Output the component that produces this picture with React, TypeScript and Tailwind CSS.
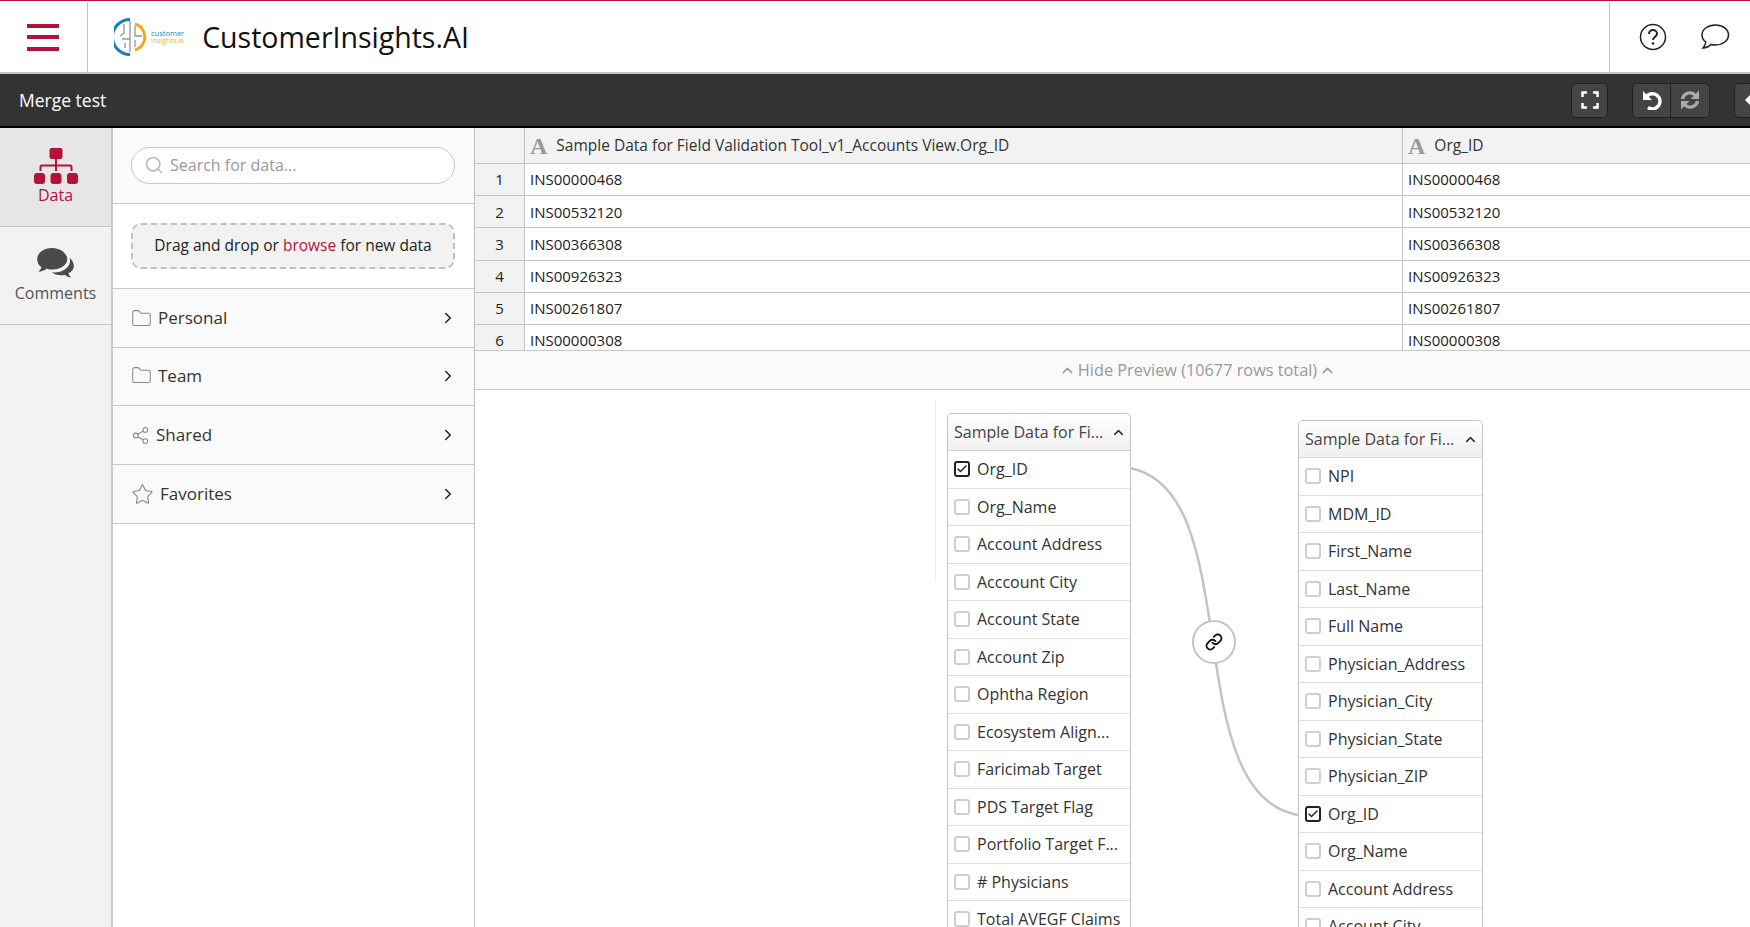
import { ChevronRight, ChevronUp, Folder, Search, Share2, Star, Link, Check } from "lucide-react";

const previewRows = ["INS00000468", "INS00532120", "INS00366308", "INS00926323", "INS00261807", "INS00000308"];

const leftFields = [
  "Org_ID",
  "Org_Name",
  "Account Address",
  "Acccount City",
  "Account State",
  "Account Zip",
  "Ophtha Region",
  "Ecosystem Align...",
  "Faricimab Target",
  "PDS Target Flag",
  "Portfolio Target F...",
  "# Physicians",
  "Total AVEGF Claims",
];

const rightFields = [
  "NPI",
  "MDM_ID",
  "First_Name",
  "Last_Name",
  "Full Name",
  "Physician_Address",
  "Physician_City",
  "Physician_State",
  "Physician_ZIP",
  "Org_ID",
  "Org_Name",
  "Account Address",
  "Account City",
];

function Logo() {
  return (
    <div className="flex items-center">
      <svg width="34" height="38" viewBox="0 0 34 38" fill="none">
        <path d="M16 1.500A17 17 0 0 0 16 36.500" stroke="#1b7fc4" strokeWidth="3" />
        <path d="M21 6A13.500 13.500 0 0 1 21 32" stroke="#f5a623" strokeWidth="3" />
        <path d="M10 6v9l-4 3M16 3v31M21 8v10h7M16 21H8M21 22v7M11 25v5" stroke="#8d99a1" strokeWidth="1.300" />
      </svg>
      <div className="ml-[3px] flex flex-col text-[7.500px] leading-[7px]">
        <span className="text-[#2a7fb8]">customer</span>
        <span className="text-[7px] text-[#f2b35a]">insights.ai</span>
      </div>
    </div>
  );
}

function CommentsIcon() {
  return (
    <svg width="40" height="31" viewBox="0 0 40 33" fill="#4a4a4a">
      <path d="M16 0C7 0 0 5 0 12c0 3.500 1.800 6.500 4.500 8.500C4 22.500 2.800 24 1 25c3.500 0 6.500-1 9-3 2 .6 4 1 6 1 9 0 16-5 16-11S25 0 16 0z" />
      <path d="M34.500 10.500c.3 1 .5 2 .5 3 0 7.500-8.500 12.500-17 12.500l-2.500-.2c2.500 2 6 3.200 9.500 3.200 1.500 0 3-.2 4.300-.6 2 1.800 4.200 2.700 6.700 2.900-1.300-1-2.300-2.500-2.700-4.300 3.500-1.800 5.700-4.500 5.700-7.800 0-3.300-2-6.300-4.500-8.700z" />
    </svg>
  );
}

function HierarchyIcon() {
  return (
    <svg width="44" height="36" viewBox="0 0 44 36" fill="#b5123a">
      <rect x="15.500" y="0" width="13" height="11" rx="2" />
      <rect x="0" y="25" width="11" height="11" rx="3" />
      <rect x="16.500" y="25" width="11" height="11" rx="3" />
      <rect x="33" y="25" width="11" height="11" rx="3" />
      <path d="M21 11h2v5.500h13.500a2 2 0 0 1 2 2V23h-2v-4.500H23V23h-2v-4.500H7.500V23h-2v-4.500a2 2 0 0 1 2-2H21z" />
    </svg>
  );
}

function FieldRow({ label, checked }: { label: string; checked?: boolean }) {
  return (
    <div className="flex h-[37.500px] shrink-0 items-center border-b border-[#e0e0e0] pl-[6px] text-[16px] text-[#333]">
      {checked ? (
        <span className="flex size-[16px] items-center justify-center rounded-[3px] border-2 border-[#222] bg-white">
          <Check size={12} strokeWidth={3} className="text-[#222]" />
        </span>
      ) : (
        <span className="size-[16px] rounded-[3px] border-2 border-[#cfcfcf] bg-white" />
      )}
      <span className="ml-[7px] whitespace-nowrap">{label}</span>
    </div>
  );
}

function TableNode({ fields, checkedField, className }: { fields: string[]; checkedField: string; className: string }) {
  return (
    <div className={`absolute overflow-hidden rounded-t-[5px] border border-b-0 border-[#c4c4c4] bg-white ${className}`}>
      <div className="flex h-[37px] items-center justify-between border-b border-[#d6d6d6] bg-gradient-to-b from-white to-[#f0f0f0] pl-[6px] pr-[4px] text-[16px] text-[#444]">
        <span className="whitespace-nowrap">Sample Data for Fi...</span>
        <ChevronUp size={15} strokeWidth={2.500} className="text-[#333]" />
      </div>
      {fields.map((f) => (
        <FieldRow key={f} label={f} checked={f === checkedField} />
      ))}
    </div>
  );
}

export default function App() {
  return (
    <div className="flex h-[927px] w-[1750px] flex-col overflow-hidden bg-white font-['Open_Sans',sans-serif] text-[#333]">
      <header className="flex h-[74px] shrink-0 border-b-2 border-t border-b-[#c8c8c8] border-t-[#b5123a] bg-white">
        <div className="mt-[1px] flex w-[88px] items-center justify-center border-r border-[#c4c4c4]">
          <div className="flex flex-col gap-[7.500px] pr-[1px]">
            <span className="h-[4px] w-[32px] bg-[#b5123a]" />
            <span className="h-[4px] w-[32px] bg-[#b5123a]" />
            <span className="h-[4px] w-[32px] bg-[#b5123a]" />
          </div>
        </div>
        <div className="ml-[26px] flex flex-1 items-center">
          <Logo />
          <h1 className="ml-[18px] mt-[2px] text-[28.500px] font-medium leading-none text-[#111]">CustomerInsights.AI</h1>
        </div>
        <div className="mt-[1px] flex w-[141px] items-center gap-[33px] border-l border-[#c4c4c4] pl-[29px]">
          <svg width="28" height="28" viewBox="0 0 28 28" fill="none" stroke="#222" strokeWidth="1.500" className="shrink-0">
            <circle cx="14" cy="14" r="12.500" />
            <path d="M10 11c0-2.300 1.800-4 4-4s4 1.700 4 3.800c0 3-4 3-4 6.200" strokeWidth="2" />
            <circle cx="14" cy="20.500" r="1.300" fill="#222" stroke="none" />
          </svg>
          <svg width="30" height="26" viewBox="0 0 30 26" fill="none" stroke="#222" strokeWidth="1.500" className="shrink-0">
            <path d="M15.500 1C8 1 2 5 2 11c0 2.800 1.500 5.300 3.800 7-.2 2-1.200 4-2.800 6 3.500-.2 6.300-1.800 8-3.600 1.400.3 3 .5 4.500.5C23 20.900 28.500 16.500 28.500 11S23 1 15.500 1z" />
          </svg>
        </div>
      </header>

      <div className="flex h-[54px] shrink-0 items-center justify-between border-b-2 border-black bg-[#333]">
        <span className="ml-[19px] text-[17.500px] font-medium text-white">Merge test</span>
        <div className="flex items-center">
          <button type="button" className="mr-[24px] flex h-[35px] w-[37px] items-center justify-center rounded-[5px] border border-[#222] bg-[#444]">
            <svg width="18" height="18" viewBox="0 0 18 18" fill="none" stroke="#fff" strokeWidth="2.500">
              <path d="M1.500 6V1.500H6M12 1.500h4.500V6M16.500 12v4.500H12M6 16.500H1.500V12" />
            </svg>
          </button>
          <div className="mr-[24px] flex h-[35px]">
            <button type="button" className="flex w-[39px] items-center justify-center rounded-l-[5px] border border-[#222] bg-[#444]">
              <svg width="20" height="20" viewBox="0 0 20 20" fill="none" stroke="#fff" strokeWidth="3.400">
                <path d="M4.500 6.500A7.600 7.600 0 1 1 6 17.500" />
                <path d="M1 1v9h9z" fill="#fff" stroke="none" />
              </svg>
            </button>
            <button type="button" className="flex w-[39px] items-center justify-center rounded-r-[5px] border border-l-0 border-[#222] bg-[#444]">
              <svg width="20" height="20" viewBox="0 0 20 20" fill="none" stroke="#aaa" strokeWidth="3.400">
                <path d="M2.500 9a7.500 7.500 0 0 1 13-3.500" />
                <path d="M17.500 11a7.500 7.500 0 0 1-13 3.500" />
                <path d="M19 .5v8.500h-8.500z" fill="#aaa" stroke="none" />
                <path d="M1 19.500V11h8.500z" fill="#aaa" stroke="none" />
              </svg>
            </button>
          </div>
          <button type="button" className="flex h-[35px] w-[16px] items-center justify-start overflow-hidden rounded-l-[5px] border border-r-0 border-[#222] bg-[#444] pl-[10px]">
            <span className="block size-0 border-y-[6px] border-r-[6px] border-y-transparent border-r-white" />
          </button>
        </div>
      </div>

      <div className="flex min-h-0 flex-1">
        <nav className="w-[113px] shrink-0 border-r-2 border-[#c8c8c8] bg-[#f2f2f2]">
          <div className="flex h-[99px] flex-col items-center border-b border-[#c8c8c8] bg-[#e6e6e6] pt-[20px] text-[#b5123a]">
            <HierarchyIcon />
            <span className="text-[16px] leading-[22px]">Data</span>
          </div>
          <div className="flex h-[98px] flex-col items-center border-b border-[#c8c8c8] pt-[21px] text-[#555]">
            <CommentsIcon />
            <span className="mt-[3px] text-[16px] leading-[22px]">Comments</span>
          </div>
        </nav>

        <aside className="w-[362px] shrink-0 border-r border-[#c0c0c0] bg-white">
          <div className="flex h-[76px] items-center border-b border-[#c8c8c8] bg-[#fafafa] pb-[1px] pl-[18px]">
            <div className="flex h-[37px] w-[324px] items-center rounded-full border border-[#c8c8c8] bg-white pl-[12px] text-[16px] text-[#999]">
              <Search size={20} className="text-[#bbb]" />
              <span className="ml-[6px]">Search for data...</span>
            </div>
          </div>
          <div className="flex h-[85px] items-center border-b border-[#c8c8c8] pb-[1px] pl-[18px]">
            <div className="flex h-[46px] w-[324px] items-center justify-center rounded-[10px] border-2 border-dashed border-[#c0c0c0] bg-[#f2f2f2] text-[15.500px] font-normal text-[#222]">
              Drag and drop or&nbsp;<span className="text-[#b5123a]">browse</span>&nbsp;for new data
            </div>
          </div>
          {[
            { label: "Personal", icon: <Folder size={21} strokeWidth={1.200} />, h: "h-[59px]" },
            { label: "Team", icon: <Folder size={21} strokeWidth={1.200} />, h: "h-[58px] pb-[2px]" },
            { label: "Shared", icon: <Share2 size={19} strokeWidth={1.300} />, h: "h-[59px]" },
            { label: "Favorites", icon: <Star size={23} strokeWidth={1.200} />, h: "h-[59px]" },
          ].map((item) => (
            <div key={item.label} className={`flex items-center justify-between border-b border-[#c8c8c8] bg-[#fafafa] pl-[18px] pr-[17px] ${item.h}`}>
              <div className="flex items-center gap-[6px] text-[17px] text-[#333]">
                <span className="text-[#888]">{item.icon}</span>
                {item.label}
              </div>
              <ChevronRight size={18} strokeWidth={2} className="text-[#222]" />
            </div>
          ))}
        </aside>

        <main className="flex min-w-0 flex-1 flex-col">
          <div className="h-[223px] shrink-0 overflow-hidden border-b border-[#c8c8c8]">
            <div className="flex h-[36px] items-center border-b border-[#c4c4c4] bg-[#f2f2f2] text-[15.500px] font-medium text-[#333]">
              <div className="h-full w-[50px] shrink-0 border-r border-[#c4c4c4]" />
              <div className="flex h-full w-[878px] shrink-0 items-center border-r border-[#c4c4c4] pl-[5px]">
                <span className="font-['Liberation_Serif',serif] text-[24px] font-bold leading-none text-[#999]">A</span>
                <span className="ml-[9px] whitespace-nowrap">Sample Data for Field Validation Tool_v1_Accounts View.Org_ID</span>
              </div>
              <div className="flex h-full flex-1 items-center pl-[5px]">
                <span className="font-['Liberation_Serif',serif] text-[24px] font-bold leading-none text-[#999]">A</span>
                <span className="ml-[9px]">Org_ID</span>
              </div>
            </div>
            {previewRows.map((id, i) => (
              <div key={id} className="flex h-[32.200px] items-center border-b border-[#c4c4c4] text-[15px] text-[#222]">
                <div className="flex h-full w-[50px] shrink-0 items-center justify-center border-r border-[#c4c4c4] bg-[#f2f2f2] text-[#222]">{i + 1}</div>
                <div className="flex h-full w-[878px] shrink-0 items-center border-r border-[#c4c4c4] pl-[5px]">{id}</div>
                <div className="flex h-full flex-1 items-center pl-[5px]">{id}</div>
              </div>
            ))}
          </div>
          <div className="flex h-[39px] shrink-0 items-center justify-center gap-[2px] border-b border-[#c8c8c8] bg-[#fafafa] pl-[170px] text-[16.300px] text-[#999]">
            <ChevronUp size={17} strokeWidth={2} />
            Hide Preview (10677 rows total)
            <ChevronUp size={17} strokeWidth={2} />
          </div>
          <div className="relative min-h-0 flex-1 overflow-hidden bg-white">
            <div className="absolute left-[460px] top-[10px] h-[182px] w-px bg-[#f0f0f0]" />
            <TableNode fields={leftFields} checkedField="Org_ID" className="left-[472px] top-[23px] w-[184px]" />
            <TableNode fields={rightFields} checkedField="Org_ID" className="left-[823px] top-[30px] w-[185px]" />
            <svg className="absolute left-[640px] top-[70px]" width="190" height="360" viewBox="0 0 190 360" fill="none" stroke="#c4c4c4" strokeWidth="2.500">
              <path d="M15 8C75 20 85 100 98 182C110 270 125 345 183 355" />
            </svg>
            <div className="absolute left-[717px] top-[230px] flex size-[44px] items-center justify-center rounded-full border-2 border-[#c4c4c4] bg-white">
              <Link size={18} strokeWidth={2.500} className="text-[#111]" />
            </div>
          </div>
        </main>
      </div>
    </div>
  );
}
